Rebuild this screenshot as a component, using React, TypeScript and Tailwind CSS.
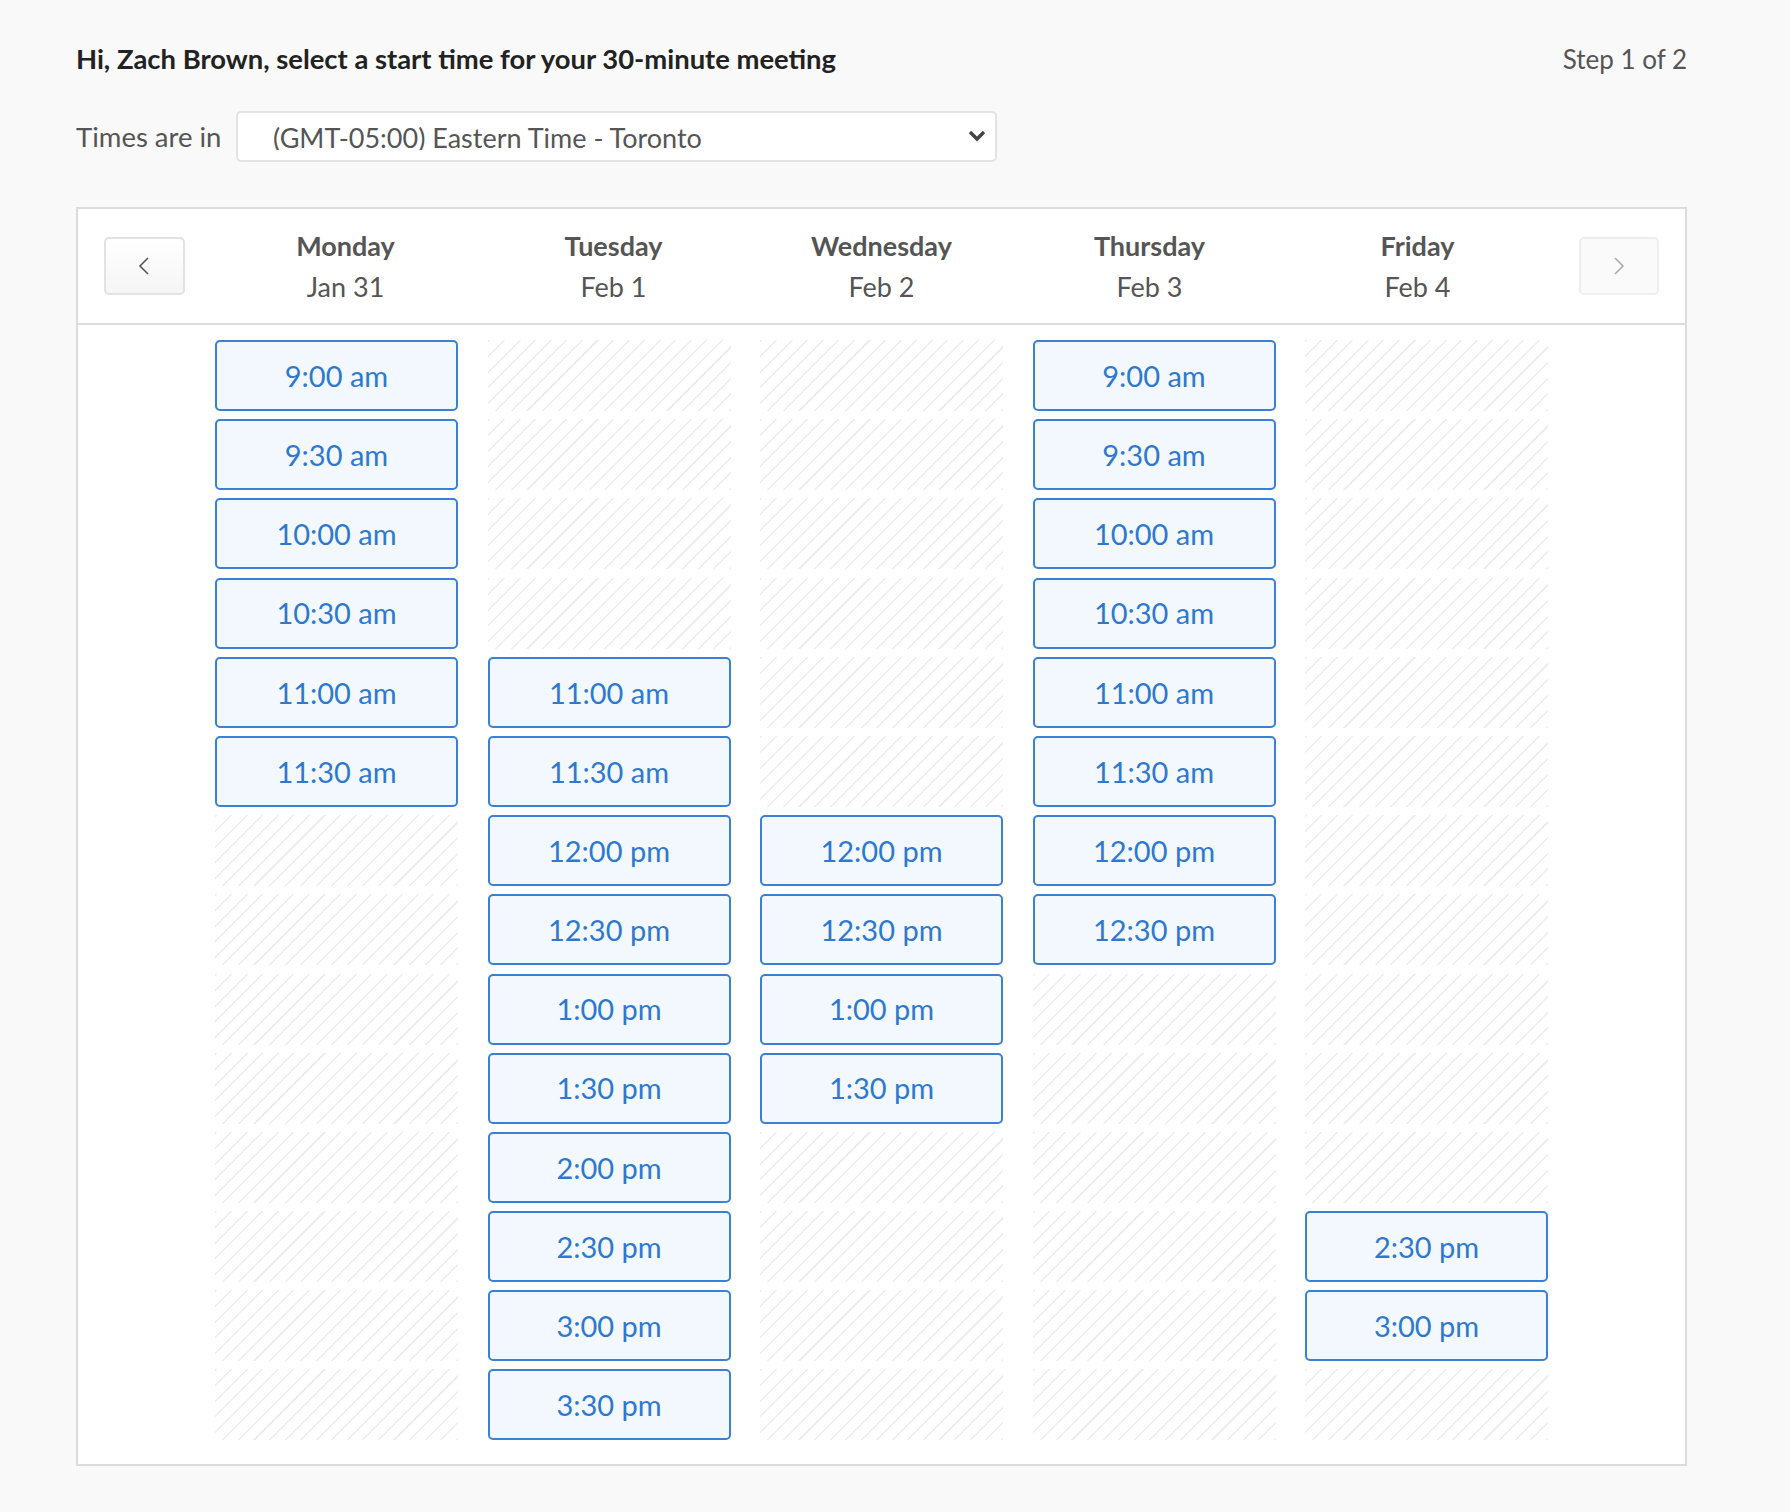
import React from 'react';

const TIMES = [
  '9:00 am', '9:30 am', '10:00 am', '10:30 am', '11:00 am', '11:30 am',
  '12:00 pm', '12:30 pm', '1:00 pm', '1:30 pm', '2:00 pm', '2:30 pm', '3:00 pm', '3:30 pm',
];

// index ranges of open slots per day (inclusive)
const DAYS = [
  { name: 'Monday', date: 'Jan 31', open: [0, 5] },
  { name: 'Tuesday', date: 'Feb 1', open: [4, 13] },
  { name: 'Wednesday', date: 'Feb 2', open: [6, 9] },
  { name: 'Thursday', date: 'Feb 3', open: [0, 7] },
  { name: 'Friday', date: 'Feb 4', open: [11, 12] },
];

function Chevron({ dir, color }: { dir: 'left' | 'right'; color: string }) {
  return (
    <svg width="12" height="20" viewBox="0 0 12 20" fill="none" stroke={color} strokeWidth="1.6">
      {dir === 'left' ? <polyline points="10,2 2,10 10,18" /> : <polyline points="2,2 10,10 2,18" />}
    </svg>
  );
}

export default function App() {
  return (
    <main className="min-h-screen bg-[#f9f9f9] font-['Lato','Liberation_Sans',sans-serif] text-[#555]">
      <div className="ml-[76px] w-[1611px] pt-[40px]">
        {/* title */}
        <div className="flex h-[38px] items-center justify-between">
          <h1 className="text-[27.4px] font-bold text-[#222]">
            Hi, Zach Brown, select a start time for your 30-minute meeting
          </h1>
          <span className="text-[26px] text-[#555]">Step 1 of 2</span>
        </div>

        {/* timezone */}
        <div className="mt-[33px] flex items-center">
          <span className="w-[160px] text-[27.5px] text-[#555]">Times are in</span>
          <div className="flex h-[51px] w-[761px] items-start justify-between rounded-[5px] border-2 border-[#e3e3e3] bg-white pl-[35px] pr-[9px]">
            <div className="mt-[5px] h-[32px] overflow-hidden">
              <span className="block text-[27px] leading-[40px] text-[#555]">
                (GMT-05:00) Eastern Time - Toronto
              </span>
            </div>
            <svg className="mt-[16px]" width="18" height="13" viewBox="0 0 18 13" fill="none" stroke="#444" strokeWidth="3.4">
              <polyline points="2,3 9,10 16,3" />
            </svg>
          </div>
        </div>

        {/* calendar */}
        <div className="mt-[45px] border-2 border-[#dcdcdc] bg-white">
          <div className="flex h-[116px] items-center border-b-2 border-[#dcdcdc] px-[26px]">
            <button className="flex h-[58px] w-[81px] items-center justify-center rounded-[5px] border-2 border-[#e2e2e2] bg-gradient-to-b from-white to-[#f5f5f5]">
              <Chevron dir="left" color="#555" />
            </button>
            <div className="flex flex-1 px-[27px]">
              {DAYS.map((d) => (
                <div key={d.name} className="w-[268px] text-center text-[27px] leading-[41px] text-[#555]">
                  <div className="font-bold">{d.name}</div>
                  <div>{d.date}</div>
                </div>
              ))}
            </div>
            <button className="flex h-[58px] w-[81px] items-center justify-center rounded-[5px] border-2 border-[#eeeeee] bg-[#fafafa]">
              <Chevron dir="right" color="#aaa" />
            </button>
          </div>

          <div className="flex gap-[29.5px] pb-[24px] pl-[137px] pt-[15px]">
            {DAYS.map((d) => (
              <div key={d.name} className="flex w-[243px] flex-col gap-[8.2px]">
                {TIMES.map((t, i) =>
                  i >= d.open[0] && i <= d.open[1] ? (
                    <button
                      key={t}
                      className="flex h-[71px] items-center justify-center rounded-[5px] border-2 border-[#3a80d4] bg-[#f3f8fe] text-[29px] text-[#2f78cf]"
                    >
                      {t}
                    </button>
                  ) : (
                    <div
                      key={t}
                      className="h-[71px] bg-[repeating-linear-gradient(135deg,#eeeeee_0px,#eeeeee_1.5px,transparent_1.5px,transparent_11px)]"
                    />
                  )
                )}
              </div>
            ))}
          </div>
        </div>
      </div>
    </main>
  );
}
